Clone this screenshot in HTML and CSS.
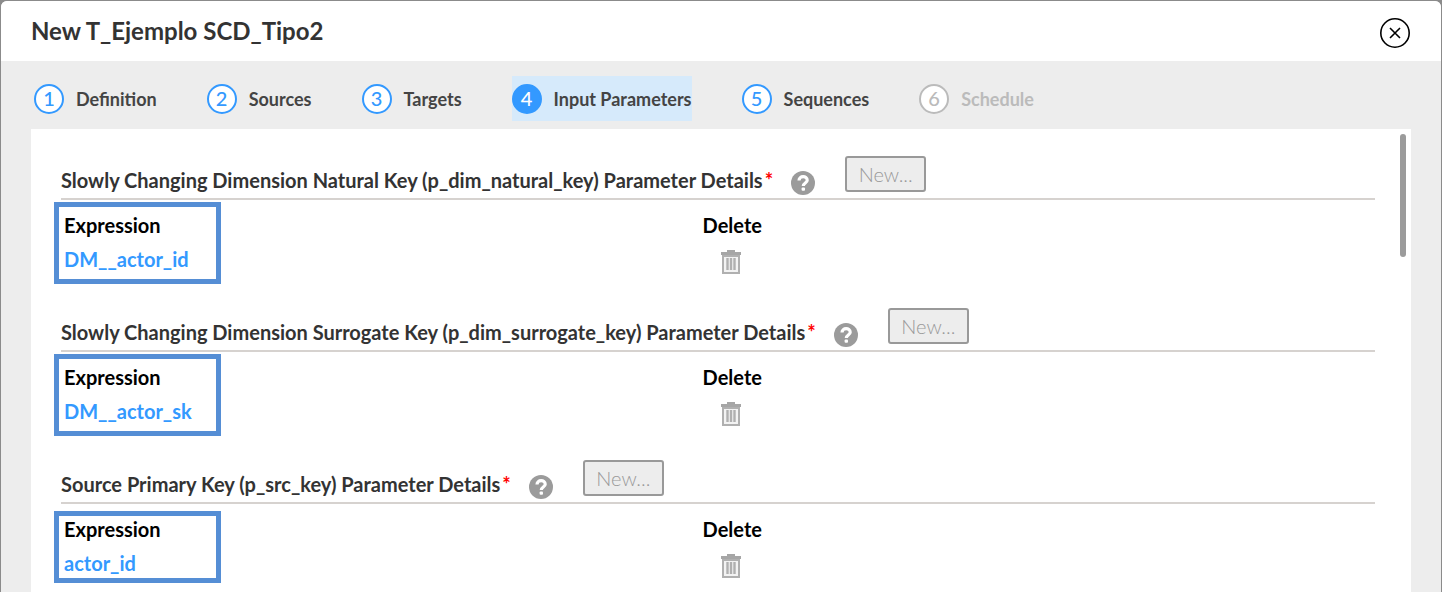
FILE: index.html
```html
<!DOCTYPE html>
<html lang="en">
<head>
<meta charset="utf-8">
<title>New T_Ejemplo SCD_Tipo2</title>
<link rel="stylesheet" href="styles.css">
</head>
<body>
<svg class="defs" aria-hidden="true">
  <symbol id="help" viewBox="0 0 24 24"><circle cx="12" cy="12" r="12" fill="#9b9b9b"/><path d="M8 9.500C8 4.400 16.200 4.400 16.200 9.200C16.200 12 12.300 12 12.300 15" fill="none" stroke="#fff" stroke-width="3.200"/><rect x="10.600" y="16.600" width="3.400" height="3.200" rx="1" fill="#fff"/></symbol>
  <symbol id="trash" viewBox="0 0 22 24"><path d="M7 0h8v2h6v3H1V2h6z" fill="#a6a6a6"/><path d="M3 6h16v17H3z" fill="#f3f3f3" stroke="#b0b0b0" stroke-width="2"/><path d="M7.500 8v12M11 8v12M14.500 8v12" stroke="#b0b0b0" stroke-width="2.400"/></symbol>
</svg>
<main class="dialog">
  <header class="dialog-header">
    <h1 class="dialog-title">New T_Ejemplo SCD_Tipo2</h1>
    <button class="close" type="button" aria-label="Close"><svg viewBox="0 0 30 30" fill="none" stroke="#000" stroke-width="1.6"><circle cx="15" cy="15" r="14.2"/><path d="M10 10l10 10M20 10L10 20"/></svg></button>
  </header>
  <nav class="steps">
    <button class="step" type="button"><span class="num">1</span><span class="name">Definition</span></button>
    <button class="step" type="button"><span class="num">2</span><span class="name">Sources</span></button>
    <button class="step" type="button"><span class="num">3</span><span class="name">Targets</span></button>
    <button class="step active" type="button" aria-current="step"><span class="num">4</span><span class="name">Input Parameters</span></button>
    <button class="step" type="button"><span class="num">5</span><span class="name">Sequences</span></button>
    <button class="step" type="button" disabled><span class="num">6</span><span class="name">Schedule</span></button>
  </nav>
  <div class="panel">
    <section class="param">
      <div class="param-head">
        <h2 class="param-title">Slowly Changing Dimension Natural Key (p_dim_natural_key) Parameter Details<span class="req">*</span></h2>
        <button class="help" type="button" aria-label="Help"><svg><use href="#help"/></svg></button>
        <button class="new" type="button" disabled>New...</button>
      </div>
      <div class="param-body">
        <table class="grid">
          <tr><th class="expr">Expression</th><th>Delete</th></tr>
          <tr><td><a class="value" href="#">DM__actor_id</a></td><td><button class="delete" type="button" aria-label="Delete"><svg><use href="#trash"/></svg></button></td></tr>
        </table>
        <div class="mark"></div>
      </div>
    </section>
    <section class="param">
      <div class="param-head">
        <h2 class="param-title">Slowly Changing Dimension Surrogate Key (p_dim_surrogate_key) Parameter Details<span class="req">*</span></h2>
        <button class="help" type="button" aria-label="Help"><svg><use href="#help"/></svg></button>
        <button class="new" type="button" disabled>New...</button>
      </div>
      <div class="param-body">
        <table class="grid">
          <tr><th class="expr">Expression</th><th>Delete</th></tr>
          <tr><td><a class="value" href="#">DM__actor_sk</a></td><td><button class="delete" type="button" aria-label="Delete"><svg><use href="#trash"/></svg></button></td></tr>
        </table>
        <div class="mark"></div>
      </div>
    </section>
    <section class="param">
      <div class="param-head">
        <h2 class="param-title">Source Primary Key (p_src_key) Parameter Details<span class="req">*</span></h2>
        <button class="help" type="button" aria-label="Help"><svg><use href="#help"/></svg></button>
        <button class="new" type="button" disabled>New...</button>
      </div>
      <div class="param-body">
        <table class="grid">
          <tr><th class="expr">Expression</th><th>Delete</th></tr>
          <tr><td><a class="value" href="#">actor_id</a></td><td><button class="delete" type="button" aria-label="Delete"><svg><use href="#trash"/></svg></button></td></tr>
        </table>
        <div class="mark short"></div>
      </div>
    </section>
    <div class="thumb"></div>
  </div>
</main>
</body>
</html>
```
FILE: styles.css
```css
* { box-sizing: border-box; }
body {
  margin: 0;
  height: 100vh;
  padding: 1px 1px 0;
  overflow: hidden;
  background: #8b8b8b;
  color: #333;
  font-family: Lato, "Open Sans", sans-serif;
  font-size: 20px;
  font-weight: 700;
}
button { margin: 0; padding: 0; border: 0; background: none; font: inherit; color: inherit; }
svg { display: block; width: 100%; height: 100%; }
.defs { position: absolute; width: 0; height: 0; }
.dialog {
  display: flex;
  flex-direction: column;
  height: 100%;
  overflow: hidden;
  border-radius: 6px 6px 0 0;
  background: #ededed;
}
.dialog-header {
  flex: none;
  display: flex;
  justify-content: space-between;
  align-items: flex-start;
  height: 60px;
  padding: 0 31px 0 30px;
  background: #fff;
}
.dialog-title { margin: 14px 0 0; font-size: 24px; line-height: 32px; font-weight: 700; }
.close { width: 30px; height: 30px; margin-top: 17px; }
.steps { flex: none; display: flex; gap: 50px; padding: 15px 33px 8px; white-space: nowrap; }
.step { display: flex; align-items: center; gap: 12px; height: 45px; color: #444; font-size: 18px; }
.step.active { background: #d6eafb; }
.num {
  width: 30px;
  height: 30px;
  border: 2px solid #39f;
  border-radius: 50%;
  background: #fff;
  color: #39f;
  font-size: 20px;
  font-weight: 500;
  line-height: 24px;
  text-align: center;
}
.active .num { background: #39f; color: #fff; }
.step:disabled { color: #bbb; }
.step:disabled .num { border-color: #bbb; color: #bbb; }
.panel {
  position: relative;
  flex: 1;
  min-height: 0;
  margin: 0 30px;
  padding: 27px 36px 0 30px;
  overflow: hidden;
  background: #fff;
}
.param { padding-bottom: 32px; }
.param-head {
  display: flex;
  align-items: flex-start;
  height: 44px;
  border-bottom: 2px solid #d6d2cf;
  white-space: nowrap;
}
.param-title { margin: 12px 0 0; font-size: 20px; line-height: 24px; font-weight: 700; }
.req { margin-left: 2px; color: #f00; }
.help { width: 24px; height: 24px; margin: 15px 30px 0 18px; }
.new {
  width: 81px;
  height: 36px;
  border: 2px solid #999;
  border-radius: 3px;
  background: #ededed;
  color: #999;
  font-size: 20px;
  font-weight: 300;
}
.param-body { position: relative; padding-top: 8px; }
.grid { width: 100%; border-collapse: collapse; table-layout: fixed; color: #000; }
.grid th, .grid td { height: 34px; padding: 0 3px; text-align: left; line-height: 24px; }
.expr { width: 48.6%; }
.value { color: #39f; text-decoration: none; }
.delete { display: block; width: 22px; height: 24px; margin: 6px 0 0 17px; }
.mark {
  position: absolute;
  top: 2px;
  left: -7px;
  width: 167px;
  height: 82px;
  border: 5px solid #558ed5;
}
.mark.short { top: 7px; height: 72px; }
.thumb {
  position: absolute;
  top: 5px;
  right: 5px;
  width: 6px;
  height: 123px;
  border-radius: 3px;
  background: #9b9b9b;
}
```
